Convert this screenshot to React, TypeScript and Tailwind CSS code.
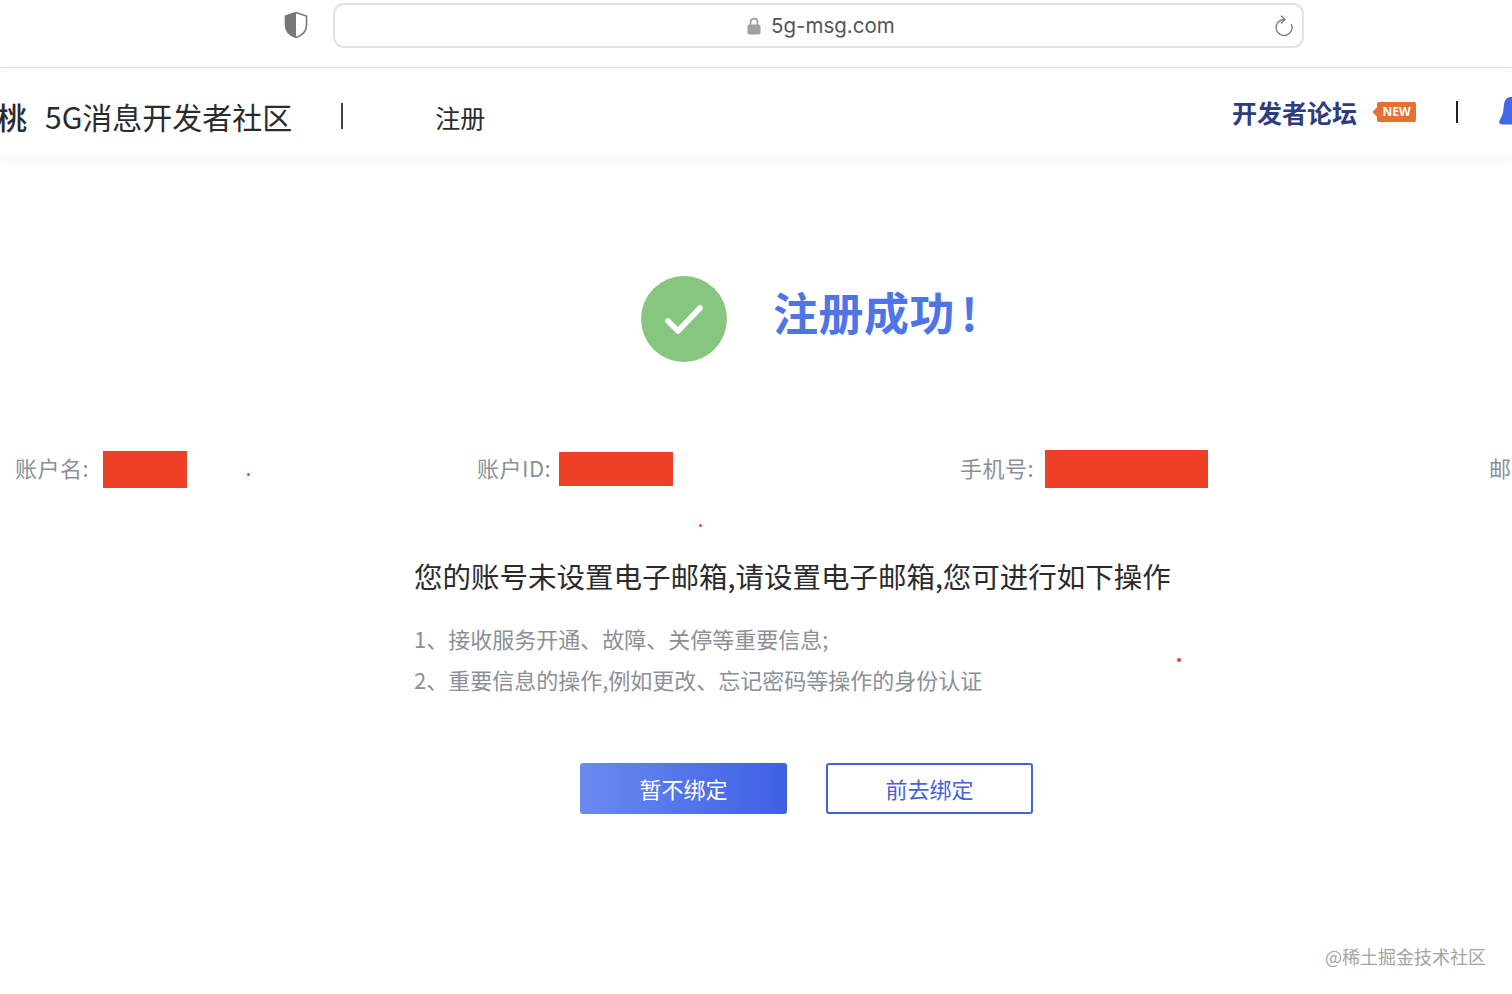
import { FC } from 'react';

const font = 'font-["Noto_Sans_CJK_SC","Noto_Sans",sans-serif]';

const ShieldIcon: FC = () => (
  <svg width="24" height="28" viewBox="0 0 24 28" aria-hidden="true">
    <path d="M12 1.5 L22.5 5 V14 C22.5 20 18 24.5 12 26.5 C6 24.5 1.5 20 1.5 14 V5 Z" fill="#fff" stroke="#777" strokeWidth="1.6" />
    <path d="M12 1.5 L1.5 5 V14 C1.5 20 6 24.5 12 26.5 Z" fill="#777" />
  </svg>
);

const LockIcon: FC = () => (
  <svg width="14" height="18" viewBox="0 0 14 18" aria-hidden="true">
    <path d="M3.5 8 V5 C3.5 0.5 10.5 0.5 10.5 5 V8" fill="none" stroke="#a0a0a0" strokeWidth="1.8" />
    <rect x="0.5" y="7.5" width="13" height="10" rx="2" fill="#a0a0a0" />
  </svg>
);

const ReloadIcon: FC = () => (
  <svg width="20" height="22" viewBox="0 0 20 22" aria-hidden="true">
    <path d="M10 4.5 A8 8 0 1 0 17.5 9.5" fill="none" stroke="#808080" strokeWidth="1.4" strokeLinecap="round" />
    <path d="M7.5 1 L11 4.5 L7.5 8" fill="none" stroke="#808080" strokeWidth="1.4" strokeLinecap="round" strokeLinejoin="round" />
  </svg>
);

const BellIcon: FC = () => (
  <svg width="24" height="30" viewBox="0 0 24 30" aria-hidden="true" className="shrink-0">
    <path d="M12 0 C6 0 5 5 4.5 12 C4 18 2 21 0.5 23.5 C-0.5 26 1 27.5 3 27.5 H24 V0 Z" fill="#4466e8" />
  </svg>
);

const Field: FC<{ label: string; redact: string }> = ({ label, redact }) => (
  <div className="flex items-center">
    <span className="-mt-[4px] text-[22px] leading-[30px] tracking-[0.5px] whitespace-nowrap text-[#8b8f97]">{label}</span>
    <span className={redact} />
  </div>
);

export default function App() {
  return (
    <div className={`relative h-[994px] w-[1512px] overflow-hidden bg-white ${font}`}>
      {/* Browser bar */}
      <div className="flex h-[68px] items-start border-b border-[#dedede] pl-[284px] pt-[3px]">
        <div className="mt-[8px]">
          <ShieldIcon />
        </div>
        <div className="ml-[25px] flex h-[45px] w-[971px] items-center rounded-[11px] border-2 border-[#e2e2e2] bg-white pl-[412px] pr-[8px]">
          <LockIcon />
          <span className="ml-[10px] mt-[2px] font-['Inter',sans-serif] text-[20.5px] leading-none text-[#555]">5g-msg.com</span>
          <span className="ml-auto">
            <ReloadIcon />
          </span>
        </div>
      </div>

      {/* Site header */}
      <div className="relative flex h-[88px] items-center bg-white shadow-[0_4px_10px_rgba(0,0,0,0.04)]">
        <span className="-ml-[3px] mt-[8px] w-[48px] shrink-0 text-[30px] font-medium leading-none text-[#2b2b2b]">桃</span>
        <span className="mt-[8px] shrink-0 text-[30px] leading-[40px] whitespace-nowrap text-[#2b2b2b]">5G消息开发者社区</span>
        <span className="ml-[49px] mt-[8px] h-[26px] w-[2px] shrink-0 bg-[#444]" />
        <span className="ml-[92px] mt-[10px] shrink-0 text-[25px] leading-none whitespace-nowrap text-[#2b2b2b]">注册</span>
        <div className="-mr-[11px] ml-auto flex shrink-0 items-center">
          <span className="text-[25px] font-bold leading-none whitespace-nowrap text-[#2f3d80]">开发者论坛</span>
          <span className="relative ml-[20px] flex h-[20px] w-[39px] shrink-0 items-center justify-center rounded-[2px] bg-[#e8702f] font-['Open_Sans',sans-serif] text-[12px] font-bold text-[#fff]">
            <span className="absolute -left-[3px] top-[6px] h-[8px] w-[8px] rotate-45 bg-[#e8702f]" />
            <span className="relative">NEW</span>
          </span>
          <span className="ml-[40px] h-[22px] w-[2px] shrink-0 bg-[#222]" />
          <span className="ml-[41px]">
            <BellIcon />
          </span>
        </div>
      </div>

      {/* Success title */}
      <div className="ml-[641px] mt-[120px] flex items-center">
        <div className="flex h-[86px] w-[86px] shrink-0 items-center justify-center rounded-full bg-[#87c67f]">
          <svg width="40" height="32" viewBox="0 0 40 32" aria-hidden="true">
            <path d="M4 18 L14 28 L36 5" fill="none" stroke="#fff" strokeWidth="5.5" strokeLinecap="round" strokeLinejoin="round" />
          </svg>
        </div>
        <span className="ml-[46px] -mt-[14px] text-[45px] font-bold leading-[60px] tracking-[0.5px] whitespace-nowrap text-[#4f74e8]">注册成功<span className="ml-[6px]">!</span></span>
      </div>

      {/* Account info */}
      <div className="mt-[88px] grid h-[38px] grid-cols-[462px_483px_529px_1fr] items-center pl-[15px]">
        <Field label="账户名:" redact="ml-[14px] h-[37px] w-[84px] bg-[#ee4027]" />
        <Field label="账户ID:" redact="ml-[8px] h-[34px] w-[114px] bg-[#ee4027]" />
        <Field label="手机号:" redact="ml-[11px] h-[38px] w-[163px] bg-[#ee4027]" />
        <Field label="邮箱:" redact="" />
      </div>

      {/* Notice */}
      <div className="ml-[414px] mt-[68px] flex flex-col">
        <p className="text-[28.5px] leading-[40px] whitespace-nowrap text-[#2b2b2b]">您的账号未设置电子邮箱,请设置电子邮箱,您可进行如下操作</p>
        <p className="mt-[27px] text-[22px] leading-[30px] whitespace-nowrap text-[#8b8f97]">1、接收服务开通、故障、关停等重要信息;</p>
        <p className="mt-[11px] text-[22px] leading-[30px] whitespace-nowrap text-[#8b8f97]">2、重要信息的操作,例如更改、忘记密码等操作的身份认证</p>
      </div>

      {/* Actions */}
      <div className="ml-[580px] mt-[69px] flex gap-[39px]">
        <button className="h-[51px] w-[207px] rounded-[3px] bg-gradient-to-r from-[#6a8af0] to-[#3f5fe3] text-[22px] text-white">暂不绑定</button>
        <button className="h-[51px] w-[207px] rounded-[3px] border-2 border-[#4463d8] bg-white text-[22px] text-[#4463d8]">前去绑定</button>
      </div>

      {/* Stray marks and watermark */}
      <span className="absolute left-[247px] top-[473px] h-[3px] w-[3px] rounded-full bg-[#ee4027]" />
      <span className="absolute left-[699px] top-[524px] h-[3px] w-[3px] rounded-full bg-[#ee4027]" />
      <span className="absolute left-[1177px] top-[658px] h-[4px] w-[4px] rounded-full bg-[#ee4027]" />
      <span className="absolute left-[1325px] top-[943px] text-[18px] leading-[26px] whitespace-nowrap text-[#a3a3a3]">@稀土掘金技术社区</span>
    </div>
  );
}
